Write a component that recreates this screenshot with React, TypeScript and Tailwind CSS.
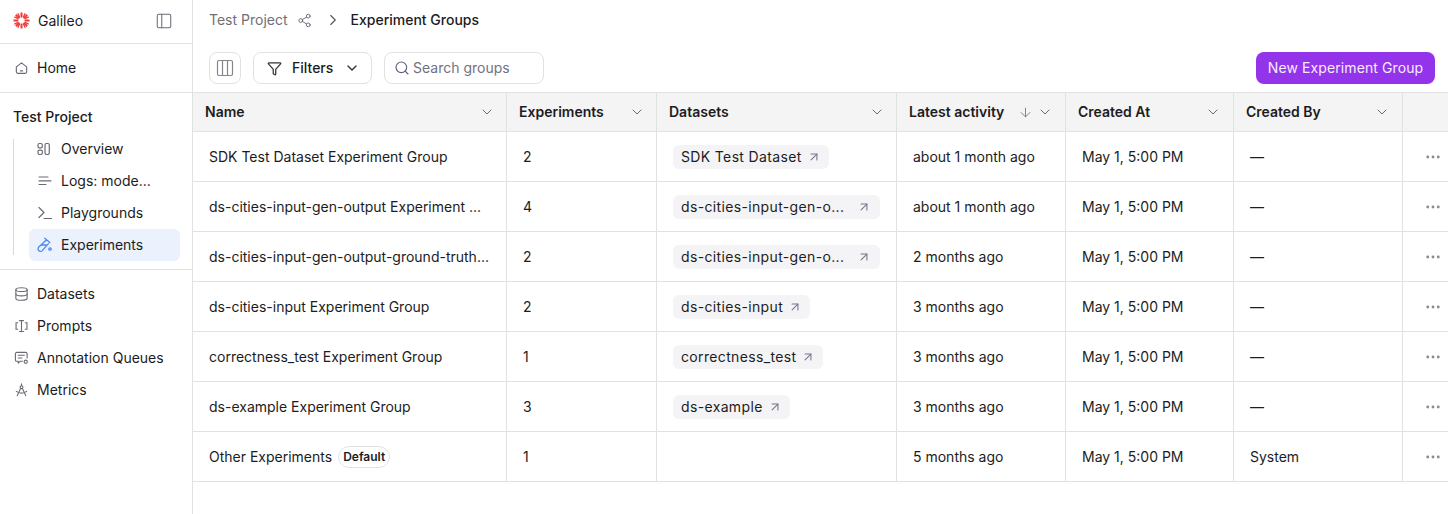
import React from 'react';
import {
  ArrowDown,
  ArrowUpRight,
  ChevronDown,
  ChevronRight,
  Database,
  Ellipsis,
  Funnel,
  PanelLeft,
  Search,
  Share2,
} from 'lucide-react';

interface Group {
  name: string;
  count: number;
  dataset?: string;
  truncated?: boolean;
  activity: string;
  createdBy: string;
  isDefault?: boolean;
}

const groups: Group[] = [
  { name: 'SDK Test Dataset Experiment Group', count: 2, dataset: 'SDK Test Dataset', activity: 'about 1 month ago', createdBy: '—' },
  { name: 'ds-cities-input-gen-output Experiment ...', count: 4, dataset: 'ds-cities-input-gen-o...', truncated: true, activity: 'about 1 month ago', createdBy: '—' },
  { name: 'ds-cities-input-gen-output-ground-truth...', count: 2, dataset: 'ds-cities-input-gen-o...', truncated: true, activity: '2 months ago', createdBy: '—' },
  { name: 'ds-cities-input Experiment Group', count: 2, dataset: 'ds-cities-input', activity: '3 months ago', createdBy: '—' },
  { name: 'correctness_test Experiment Group', count: 1, dataset: 'correctness_test', activity: '3 months ago', createdBy: '—' },
  { name: 'ds-example Experiment Group', count: 3, dataset: 'ds-example', activity: '3 months ago', createdBy: '—' },
  { name: 'Other Experiments', count: 1, activity: '5 months ago', createdBy: 'System', isDefault: true },
];

const gridCols = 'grid grid-cols-[314px_150px_240px_169px_168px_169px_45px]';

const GalileoLogo = () => (
  <svg width="17" height="17" viewBox="0 0 17 17" fill="none" stroke="#ee3a3a" strokeWidth="2">
    <path d="M8.5 0.5v5M8.5 11.5v5M0.5 8.5h5M11.5 8.5h5M2.8 2.8l3.6 3.6M10.6 10.6l3.6 3.6M14.2 2.8l-3.6 3.6M6.4 10.6l-3.6 3.6" />
    <path d="M4.8 1.3l1.8 3.8M10.4 11.9l1.8 3.8M12.2 1.3l-1.8 3.8M6.6 11.9l-1.8 3.8M1.3 4.8l3.8 1.8M11.9 10.4l3.8 1.8M15.7 4.8l-3.8 1.8M5.1 10.4l-3.8 1.8" strokeWidth="1.3" />
  </svg>
);

const HomeIcon = () => (
  <svg width="16" height="16" viewBox="0 0 16 16" fill="none" stroke="#6b6b76" strokeWidth="1.2" strokeLinecap="round" strokeLinejoin="round">
    <path d="M2.5 6.8L8 2.5l5.5 4.3v5.2a1.7 1.7 0 0 1-1.7 1.7H4.2a1.7 1.7 0 0 1-1.7-1.7Z" />
    <path d="M6.8 11h2.4" />
  </svg>
);

const OverviewIcon = () => (
  <svg width="16" height="16" viewBox="0 0 16 16" fill="none" stroke="#6b6b76" strokeWidth="1.2">
    <rect x="2" y="2.5" width="4.3" height="4.3" rx="1.4" />
    <rect x="2" y="9.2" width="4.3" height="4.3" rx="1.4" />
    <rect x="9" y="2.5" width="4.3" height="11" rx="1.4" />
  </svg>
);

const LogsIcon = () => (
  <svg width="16" height="16" viewBox="0 0 16 16" fill="none" stroke="#6b6b76" strokeWidth="1.2" strokeLinecap="round">
    <path d="M3 4h9M3 7.8h12M3 11.5h7" />
  </svg>
);

const TerminalIcon = () => (
  <svg width="16" height="16" viewBox="0 0 16 16" fill="none" stroke="#6b6b76" strokeWidth="1.2" strokeLinecap="round" strokeLinejoin="round">
    <path d="M3 2.5L8 7.5L3 12.5M8 13.5h7.5" />
  </svg>
);

const TubeIcon = () => (
  <svg width="16" height="16" viewBox="0 0 16 16" fill="none" stroke="#4b86f5" strokeWidth="1.3" strokeLinecap="round" strokeLinejoin="round">
    <path d="M8.8 1.2l5 4.3M10.6 2.8L2.8 10a2.5 2.5 0 0 0 3.5 3.6L12.4 6.6M5 8h5" />
    <circle cx="14" cy="12" r="1.2" />
  </svg>
);

const PromptIcon = () => (
  <svg width="16" height="16" viewBox="0 0 16 16" fill="none" stroke="#6b6b76" strokeWidth="1.2" strokeLinecap="round">
    <path d="M5.8 2.2h4.4M5.8 13.8h4.4M8 2.2v11.6M4 4.5H2.2v7H4M12 4.5h1.8v7H12" />
  </svg>
);

const QueueIcon = () => (
  <svg width="16" height="16" viewBox="0 0 16 16" fill="none" stroke="#6b6b76" strokeWidth="1.2" strokeLinecap="round" strokeLinejoin="round">
    <path d="M9 11.5H6.5L4.5 13.5v-2H3a1.5 1.5 0 0 1-1.5-1.5V3.5A1.5 1.5 0 0 1 3 2h9.5A1.5 1.5 0 0 1 14 3.5V8" />
    <path d="M4.5 5h6.5M4.5 8h4" />
    <circle cx="12.5" cy="12" r="1.7" />
  </svg>
);

const MetricsIcon = () => (
  <svg width="16" height="16" viewBox="0 0 16 16" fill="none" stroke="#6b6b76" strokeWidth="1.2" strokeLinecap="round" strokeLinejoin="round">
    <circle cx="8" cy="5" r="1.5" />
    <path d="M8 1.5v2M7 6.3L3.5 14M9 6.3L12.5 14M2.5 9.5c3 2.4 8 2.4 11 0" />
  </svg>
);

const ColumnsIcon = () => (
  <svg width="18" height="18" viewBox="0 0 18 18" fill="none" stroke="#85858e" strokeWidth="1.2">
    <rect x="1.5" y="1.5" width="15" height="15" rx="1.5" />
    <path d="M6.5 1.5v15M11.5 1.5v15" />
  </svg>
);

const NavItem = ({ icon, label }: { icon: React.ReactNode; label: string }) => (
  <div className="flex h-8 items-center gap-2 pl-[14px]">
    <span className="flex w-[15px] shrink-0 justify-center">{icon}</span>
    <span>{label}</span>
  </div>
);

const SubItem = ({ icon, label, active }: { icon: React.ReactNode; label: string; active?: boolean }) => (
  <div className={`flex h-8 items-center gap-[9px] rounded-md pl-[7px] ${active ? 'bg-[#ebf2fe]' : ''}`}>
    <span className="flex w-4 shrink-0 justify-center">{icon}</span>
    <span>{label}</span>
  </div>
);

const Sidebar = () => (
  <aside className="flex w-[193px] shrink-0 flex-col border-r border-[#e2e2e4]">
    <div className="flex h-11 items-center justify-between border-b border-[#e2e2e4] pb-[2px] pl-[13px] pr-[19px]">
      <div className="flex items-center gap-2">
        <GalileoLogo />
        <span>Galileo</span>
      </div>
      <PanelLeft size={18} strokeWidth={1.4} color="#6b6b76" />
    </div>
    <div className="flex h-[49px] items-center border-b border-[#e2e2e4]">
      <div className="w-full">
        <NavItem icon={<HomeIcon />} label="Home" />
      </div>
    </div>
    <div className="border-b border-[#e2e2e4] pb-2">
      <div className="pl-[13px] pt-[15px] font-medium leading-[17px]">Test Project</div>
      <div className="ml-[13px] mr-[12px] mt-2 flex">
        <div className="my-[6px] w-px bg-[#d9d9dc]" />
        <div className="ml-[15px] flex flex-1 flex-col">
          <SubItem icon={<OverviewIcon />} label="Overview" />
          <SubItem icon={<LogsIcon />} label="Logs: mode..." />
          <SubItem icon={<TerminalIcon />} label="Playgrounds" />
          <SubItem icon={<TubeIcon />} label="Experiments" active />
        </div>
      </div>
    </div>
    <div className="pt-2">
      <NavItem icon={<Database size={16} strokeWidth={1.8} color="#6b6b76" />} label="Datasets" />
      <NavItem icon={<PromptIcon />} label="Prompts" />
      <NavItem icon={<QueueIcon />} label="Annotation Queues" />
      <NavItem icon={<MetricsIcon />} label="Metrics" />
    </div>
  </aside>
);

const HeaderCell = ({ label, sorted, tight }: { label: string; sorted?: boolean; tight?: boolean }) => (
  <div className={`flex items-center justify-between border-r border-[#e2e2e4] pl-3 font-semibold ${tight ? 'pr-[12px]' : 'pr-[11px]'}`}>
    <span>{label}</span>
    <span className="flex items-center gap-[4px]">
      {sorted && <ArrowDown size={15} strokeWidth={1.6} color="#80809a" />}
      <ChevronDown size={16} strokeWidth={1.5} color="#6b6b76" />
    </span>
  </div>
);

const Row = ({ group }: { group: Group }) => (
  <div className={`${gridCols} h-[50px] border-b border-[#e2e2e4]`}>
    <div className="flex items-center gap-[6px] border-r border-[#e2e2e4] pl-4">
      <span className="whitespace-nowrap">{group.name}</span>
      {group.isDefault && (
        <span className="rounded-full border border-[#e2e2e4] px-[4px] text-xs font-semibold leading-[20px]">Default</span>
      )}
    </div>
    <div className="flex items-center border-r border-[#e2e2e4] pl-4">{group.count}</div>
    <div className="flex items-center border-r border-[#e2e2e4] pl-4">
      {group.dataset && (
        <span className={`flex h-6 items-center rounded-md bg-[#f4f4f6] pl-2 ${group.truncated ? 'pr-[9px]' : 'pr-[8px]'}`}>
          <span className="tracking-[0.35px]">{group.dataset}</span>
          <ArrowUpRight size={14} strokeWidth={1.8} color="#74748a" className={group.truncated ? 'ml-[13px]' : 'ml-[5px]'} />
        </span>
      )}
    </div>
    <div className="flex items-center border-r border-[#e2e2e4] pl-4">{group.activity}</div>
    <div className="flex items-center border-r border-[#e2e2e4] pl-4">May 1, 5:00 PM</div>
    <div className="flex items-center border-r border-[#e2e2e4] pl-4">{group.createdBy}</div>
    <div className="flex items-center justify-end pr-[6px]">
      <Ellipsis size={18} strokeWidth={1.8} color="#8a8a92" />
    </div>
  </div>
);

export default function App() {
  return (
    <div className="flex h-[514px] w-[1448px] overflow-hidden bg-white font-['Inter',sans-serif] text-sm text-[#1c1c22]">
      <Sidebar />
      <main className="flex min-w-0 flex-1 flex-col">
        <div className="flex h-10 items-center pl-4">
          <span className="text-[#6f6f78]">Test Project</span>
          <Share2 size={15} strokeWidth={1.5} color="#6b6b76" className="ml-[9px]" />
          <ChevronRight size={18} strokeWidth={1.5} color="#55555e" className="ml-[12px]" />
          <span className="ml-[9px] font-medium">Experiment Groups</span>
        </div>
        <div className="mt-3 flex h-8 items-center justify-between pl-4 pr-[13px]">
          <div className="flex items-center gap-3">
            <div className="flex size-8 items-center justify-center rounded-lg border border-[#e2e2e4]">
              <ColumnsIcon />
            </div>
            <div className="flex h-8 w-[119px] items-center rounded-lg border border-[#e2e2e4] pl-[13px] font-medium">
              <Funnel size={15} strokeWidth={2} color="#33333a" />
              <span className="ml-[10px]">Filters</span>
              <ChevronDown size={16} strokeWidth={2} color="#33333a" className="ml-[11px]" />
            </div>
            <div className="flex h-8 w-[160px] items-center gap-[3px] rounded-lg border border-[#e2e2e4] pl-[9px] text-[#72727f]">
              <Search size={16} strokeWidth={1.7} color="#5f5f7a" />
              <span>Search groups</span>
            </div>
          </div>
          <button className="h-8 w-[179px] rounded-lg bg-[#9333ea] text-[#f6ecff] tracking-[0.1px]">New Experiment Group</button>
        </div>
        <div className="mt-2">
          <div className={`${gridCols} h-10 border-y border-[#e2e2e4] bg-[#f4f4f4]`}>
            <HeaderCell label="Name" />
            <HeaderCell label="Experiments" />
            <HeaderCell label="Datasets" />
            <HeaderCell label="Latest activity" sorted tight />
            <HeaderCell label="Created At" tight />
            <HeaderCell label="Created By" tight />
            <div />
          </div>
          {groups.map((group) => (
            <Row key={group.name} group={group} />
          ))}
        </div>
      </main>
    </div>
  );
}
